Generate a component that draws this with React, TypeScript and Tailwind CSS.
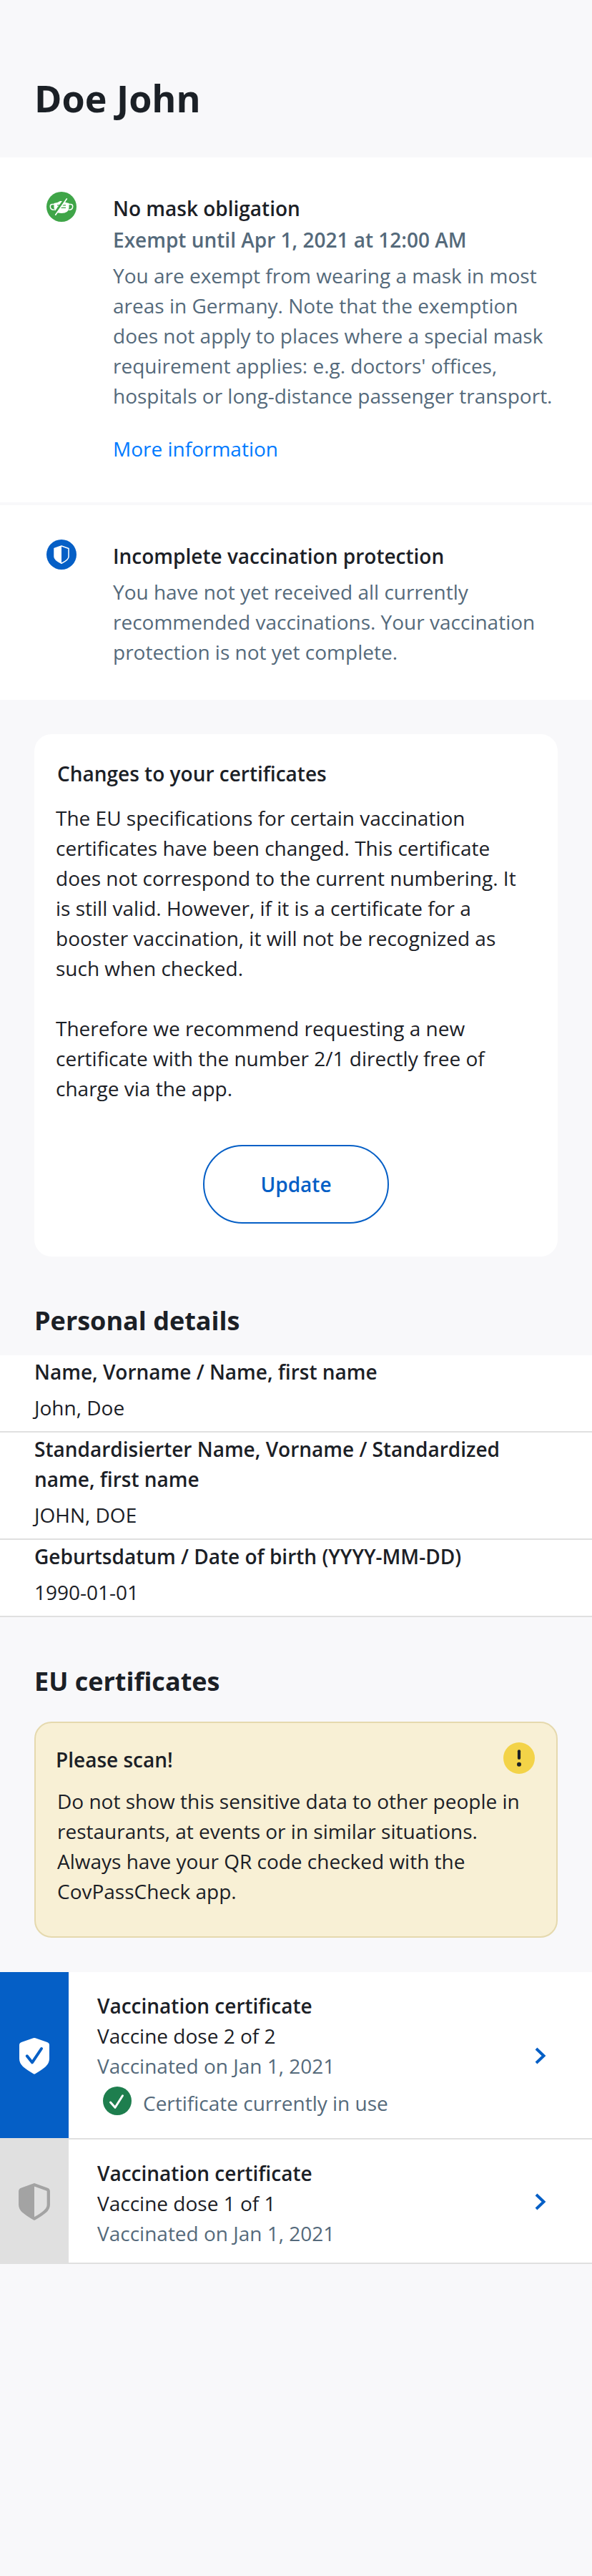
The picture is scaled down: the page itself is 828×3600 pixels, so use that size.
import React from 'react';

function NoMaskIcon() {
  return (
    <svg className="block h-[42px] w-[42px]" viewBox="0 0 42 42" fill="none">
      <circle cx="21" cy="21" r="21" fill="#3fa548" />
      <path d="M11.500 17.500H8Q5.300 17.500 5.300 20.500Q5.300 25.300 10.800 25.300M30.500 17.500H34Q36.700 17.500 36.700 20.500Q36.700 25.300 31.200 25.300" stroke="#fff" strokeWidth="1.500" />
      <path d="M10.500 16Q16 15.500 19 13H23Q27 15.500 31.500 16V22Q31 30 21 30Q11 30 10.500 22Z" fill="#fff" />
      <path d="M15 18.800H27M15 22.300H27" stroke="#3fa548" strokeWidth="1.300" />
      <path d="M11 31L26.500 9.500" stroke="#3fa548" strokeWidth="3.400" />
      <path d="M12.700 32.200L28.300 10" stroke="#fff" strokeWidth="1.700" strokeLinecap="round" />
    </svg>
  );
}

function PartialCircleIcon() {
  return (
    <svg className="block h-[42px] w-[42px]" viewBox="0 0 42 42" fill="none">
      <circle cx="21" cy="21" r="21" fill="#055fc6" />
      <path d="M21 9L31 12.500V24Q31 28.500 21 33.300Q11 28.500 11 24V12.500Z" stroke="#fff" strokeWidth="1.500" strokeLinejoin="round" />
      <path d="M21 9V33.300Q11 28.500 11 24V12.500Z" fill="#fff" />
    </svg>
  );
}

function CheckShield() {
  return (
    <svg className="mt-[2px] block h-[52px] w-11" viewBox="0 0 44 52" fill="none">
      <path d="M20.500 1.300Q22 0.700 23.500 1.300L40 7Q43 8.200 43 11V30Q43 36 38 41Q33.500 45 23.500 51Q22 52 20.500 51Q10.500 45 6 41Q1 36 1 30V11Q1 8.200 4 7Z" fill="#fff" />
      <path d="M11.800 26.300L19 35.300L32 16" stroke="#055fc6" strokeWidth="4" strokeLinecap="round" strokeLinejoin="round" />
    </svg>
  );
}

function HalfShield() {
  return (
    <svg className="mt-[2px] block h-[52px] w-11" viewBox="0 0 44 52" fill="none">
      <path d="M22 2.200L40 8.700Q41.800 9.500 41.800 11.500V30Q41.800 35.500 37 39.500Q32 44 22 49.700Q12 44 7 39.500Q2.200 35.500 2.200 30V11.500Q2.200 9.500 4 8.700Z" stroke="#a3a3a3" strokeWidth="4.300" strokeLinejoin="round" />
      <path d="M22 2.200V49.700Q12 44 7 39.500Q2.200 35.500 2.200 30V11.500Q2.200 9.500 4 8.700Z" fill="#a3a3a3" />
    </svg>
  );
}

function WarningIcon() {
  return (
    <svg className="block h-11 w-11" viewBox="0 0 44 44" fill="none">
      <circle cx="22" cy="22" r="22" fill="#f3d348" />
      <path d="M22 12.300V22" stroke="#1b2026" strokeWidth="4.200" strokeLinecap="round" />
      <circle cx="22" cy="30.800" r="3" fill="#1b2026" />
    </svg>
  );
}

function InUseIcon() {
  return (
    <svg className="block h-10 w-10" viewBox="0 0 40 40" fill="none">
      <circle cx="20" cy="20" r="20" fill="#1e7e4e" />
      <path d="M10.500 22L17 29.300L27.500 12.800" stroke="#fff" strokeWidth="3" strokeLinecap="round" strokeLinejoin="round" />
    </svg>
  );
}

function Chevron() {
  return (
    <svg className="mt-[2px] block h-6 w-4" viewBox="0 0 16 24" fill="none">
      <path d="M2 2L12.500 12L2 22" stroke="#055fc6" strokeWidth="4" />
    </svg>
  );
}

function DetailRow({ label, value }: { label: string; value: string }) {
  return (
    <div className="border-b-2 border-[#e0e0e0] bg-white px-12 pt-[2px] pb-3">
      <div className="font-semibold">{label}</div>
      <div className="mt-2">{value}</div>
    </div>
  );
}

function CertificateRow({ active, dose, children }: { active?: boolean; dose: string; children?: React.ReactNode }) {
  return (
    <div className={active ? 'flex h-[234px] bg-white' : 'flex h-[174px] bg-white'}>
      <div className={active ? 'flex w-24 items-center justify-center border-b-2 border-[#e0e0e0] bg-[#055fc6]' : 'flex w-24 items-center justify-center border-b-2 border-[#e0e0e0] bg-[#e0e0e0]'}>
        {active ? <CheckShield /> : <HalfShield />}
      </div>
      <div className="flex flex-1 items-center justify-between border-b-2 border-[#e0e0e0] pr-16 pl-10">
        <div className="self-start pt-[26px]">
          <div className="font-semibold">Vaccination certificate</div>
          <div>{dose}</div>
          <div className="text-[#556a7b]">Vaccinated on Jan 1, 2021</div>
          {children}
        </div>
        <Chevron />
      </div>
    </div>
  );
}

export default function App() {
  return (
    <div className="h-[3600px] w-[828px] bg-[#f8f8fa] font-['Open_Sans',sans-serif] text-[28px] leading-[42px] text-[#1b2026]">
      <header className="h-[220px] px-12 pt-[101px]">
        <h1 className="text-[52px] leading-[72px] font-bold">Doe John</h1>
      </header>

      <section className="flex h-[482px] bg-white pt-12 pl-[65px]">
        <NoMaskIcon />
        <div className="ml-[51px] w-[640px] pt-[2px]">
          <h2 className="font-semibold">No mask obligation</h2>
          <p className="mt-[2px] font-semibold text-[#556a7b]">Exempt until Apr 1, 2021 at 12:00 AM</p>
          <p className="mt-2 text-[#556a7b]">
            You are exempt from wearing a mask in most<br />
            areas in Germany. Note that the exemption<br />
            does not apply to places where a special mask<br />
            requirement applies: e.g. doctors' offices,<br />
            hospitals or long-distance passenger transport.
          </p>
          <a className="mt-8 block text-[#007aff]">More information</a>
        </div>
      </section>

      <section className="mt-1 flex h-[272px] bg-white pt-12 pl-[65px]">
        <PartialCircleIcon />
        <div className="ml-[51px] w-[640px] pt-[2px]">
          <h2 className="font-semibold">Incomplete vaccination protection</h2>
          <p className="mt-2 text-[#556a7b]">
            You have not yet received all currently<br />
            recommended vaccinations. Your vaccination<br />
            protection is not yet complete.
          </p>
        </div>
      </section>

      <section className="mx-12 mt-12 flex h-[730px] flex-col rounded-[24px] bg-white px-[30px] pt-[34px]">
        <h2 className="pl-[2px] font-semibold">Changes to your certificates</h2>
        <p className="mt-5 whitespace-nowrap">
          The EU specifications for certain vaccination<br />
          certificates have been changed. This certificate<br />
          does not correspond to the current numbering. It<br />
          is still valid. However, if it is a certificate for a<br />
          booster vaccination, it will not be recognized as<br />
          such when checked.
        </p>
        <p className="mt-[42px] whitespace-nowrap">
          Therefore we recommend requesting a new<br />
          certificate with the number 2/1 directly free of<br />
          charge via the app.
        </p>
        <button className="mt-[58px] h-[110px] w-[260px] self-center rounded-full border-2 border-[#055fc6] font-semibold text-[#055fc6]">Update</button>
      </section>

      <h2 className="mt-[63px] h-[75px] px-12 text-[36px] leading-[54px] font-bold">Personal details</h2>
      <section>
        <DetailRow label="Name, Vorname / Name, first name" value="John, Doe" />
        <DetailRow label="Standardisierter Name, Vorname / Standardized name, first name" value="JOHN, DOE" />
        <DetailRow label="Geburtsdatum / Date of birth (YYYY-MM-DD)" value="1990-01-01" />
      </section>

      <h2 className="mt-[63px] h-[83px] px-12 text-[36px] leading-[54px] font-bold">EU certificates</h2>
      <section className="mx-12 h-[302px] rounded-[24px] border-2 border-[#e5d9ae] bg-[#f8f0d5] px-7 pt-[27px]">
        <div className="flex h-[88px] justify-between pr-[2px]">
          <h3 className="pt-[3px] font-semibold">Please scan!</h3>
          <WarningIcon />
        </div>
        <p className="-mt-[27px] pl-[2px] whitespace-nowrap">
          Do not show this sensitive data to other people in<br />
          restaurants, at events or in similar situations.<br />
          Always have your QR code checked with the<br />
          CovPassCheck app.
        </p>
      </section>

      <section className="mt-12">
        <CertificateRow active dose="Vaccine dose 2 of 2">
          <div className="flex pt-2 pl-2">
            <InUseIcon />
            <span className="ml-4 pt-[2px] text-[#556a7b]">Certificate currently in use</span>
          </div>
        </CertificateRow>
        <CertificateRow dose="Vaccine dose 1 of 1" />
      </section>
    </div>
  );
}
